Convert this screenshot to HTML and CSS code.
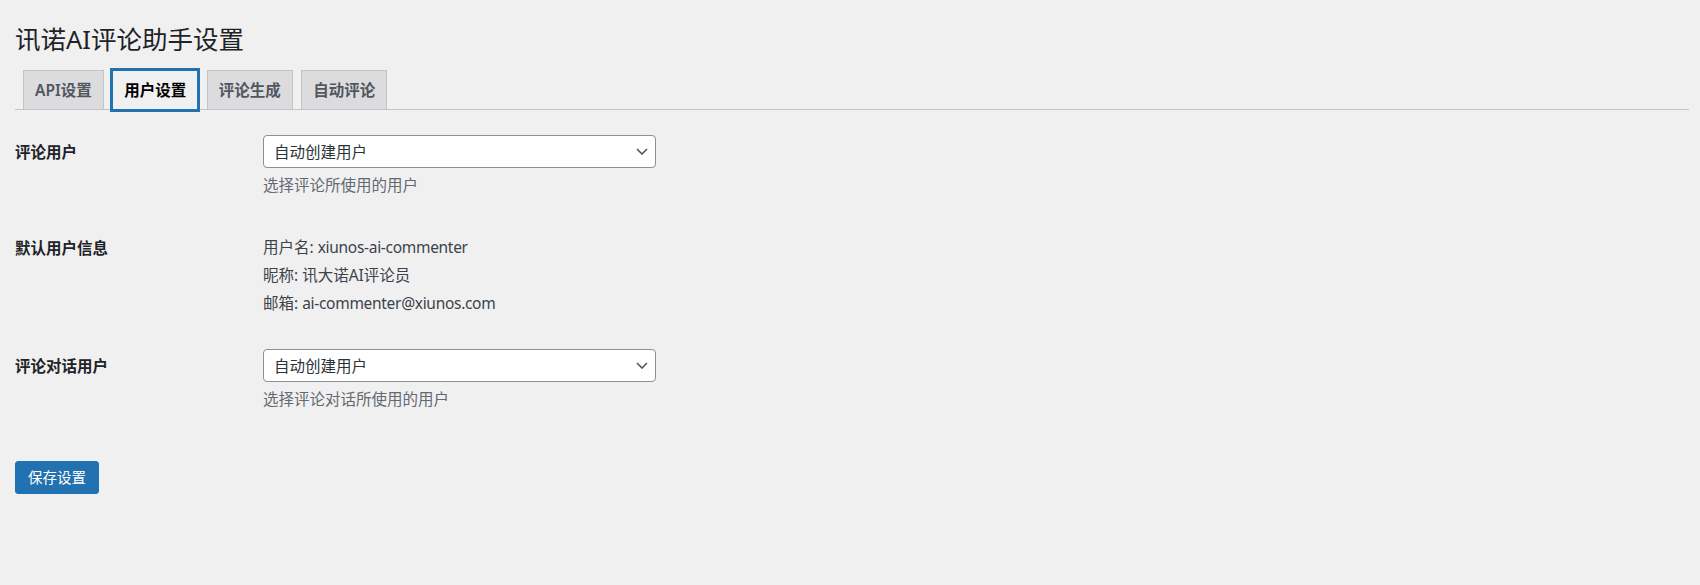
FILE: index.html
```html
<!DOCTYPE html>
<html lang="zh-CN">
<head>
    <meta charset="UTF-8">
    <meta name="viewport" content="width=device-width, initial-scale=1.0">
    <title>讯诺AI评论助手设置</title>
    <link rel="stylesheet" href="styles.css">
</head>
<body>
    <div class="wrap">
        <h1 class="page-title">讯诺AI评论助手设置</h1>
        <nav class="nav-tab-wrapper">
            <a class="nav-tab" href="#">API设置</a>
            <a class="nav-tab nav-tab-active" href="#">用户设置</a>
            <a class="nav-tab" href="#">评论生成</a>
            <a class="nav-tab" href="#">自动评论</a>
        </nav>

        <form class="settings-form">
            <div class="form-table">
                <div class="form-row">
                    <div class="form-label">评论用户</div>
                    <div class="form-field">
                        <div class="select-box">
                            <select class="select-input">
                                <option>自动创建用户</option>
                            </select>
                            <svg class="select-arrow" width="12" height="7" viewBox="0 0 12 7">
                                <path d="M1 1 L6 6 L11 1" fill="none" stroke="#50575e" stroke-width="1.6"/>
                            </svg>
                        </div>
                        <p class="description">选择评论所使用的用户</p>
                    </div>
                </div>

                <div class="form-row">
                    <div class="form-label">默认用户信息</div>
                    <div class="form-field">
                        <p class="info-line">用户名: <span class="latin">xiunos-ai-commenter</span></p>
                        <p class="info-line">昵称: 讯大诺AI评论员</p>
                        <p class="info-line">邮箱: <span class="latin">ai-commenter@xiunos.com</span></p>
                    </div>
                </div>

                <div class="form-row">
                    <div class="form-label">评论对话用户</div>
                    <div class="form-field">
                        <div class="select-box">
                            <select class="select-input">
                                <option>自动创建用户</option>
                            </select>
                            <svg class="select-arrow" width="12" height="7" viewBox="0 0 12 7">
                                <path d="M1 1 L6 6 L11 1" fill="none" stroke="#50575e" stroke-width="1.6"/>
                            </svg>
                        </div>
                        <p class="description">选择评论对话所使用的用户</p>
                    </div>
                </div>
            </div>

            <p class="submit">
                <button type="button" class="button-primary">保存设置</button>
            </p>
        </form>
    </div>
</body>
</html>
```

FILE: styles.css
```css
body {
    margin: 0;
    padding: 0;
    background: #f0f0f1;
    color: #1d2327;
    font-family: "Noto Sans", "Noto Sans CJK SC", sans-serif;
    font-size: 15.5px;
}
.wrap {
    margin: 0 11px 0 15px;
    padding-top: 12px;
}
.page-title {
    margin: 0;
    padding: 10.5px 0 4.5px;
    font-size: 25.5px;
    font-weight: 400;
    line-height: 33px;
    color: #1d2327;
}
.nav-tab-wrapper {
    display: flex;
    padding-top: 10px;
    border-bottom: 1px solid #c3c4c7;
}
.nav-tab {
    margin-left: 8.5px;
    padding: 5.5px 11px;
    font-size: 15.5px;
    font-weight: 600;
    line-height: 27px;
    color: #50575e;
    background: #dcdcde;
    border: 1px solid #c3c4c7;
    border-bottom: none;
    text-decoration: none;
    white-space: nowrap;
}
.nav-tab:first-child {
    margin-left: 8px;
}
.nav-tab-active {
    margin-bottom: -1px;
    color: #000;
    background: #f0f0f1;
    border-color: #2271b1;
    border-bottom: 1px solid #2271b1;
    box-shadow: 0 0 0 2px #2271b1;
    position: relative;
}
.form-table {
    margin-top: 8px;
}
.form-row {
    display: grid;
    grid-template-columns: 248px 1fr;
    padding: 17px 0;
}
.form-label {
    padding-top: 7px;
    font-weight: 600;
    line-height: 20px;
    color: #1d2327;
}
.select-box {
    position: relative;
    width: 393px;
}
.select-input {
    display: block;
    width: 100%;
    height: 33px;
    margin: 0;
    padding: 0 26px 0 10px;
    font-family: inherit;
    font-size: 15.5px;
    color: #2c3338;
    background: #fff;
    border: 1px solid #8c8f94;
    border-radius: 4px;
    box-sizing: border-box;
    appearance: none;
    -webkit-appearance: none;
}
.select-arrow {
    position: absolute;
    right: 8px;
    top: 13px;
    pointer-events: none;
}
.description {
    margin: 6px 0 0;
    line-height: 23px;
    color: #646970;
}
.info-line {
    margin: 4.5px 0 0;
    line-height: 23.5px;
    color: #3c434a;
}
.latin {
    letter-spacing: -0.3px;
}
.submit {
    margin: 22px 0 0;
    padding: 11px 0;
}
.button-primary {
    height: 33px;
    padding: 0 12px;
    font-family: inherit;
    font-size: 14.5px;
    line-height: 31px;
    color: #fff;
    background: #2271b1;
    border: 1px solid #2271b1;
    border-radius: 3px;
    cursor: pointer;
}
```
